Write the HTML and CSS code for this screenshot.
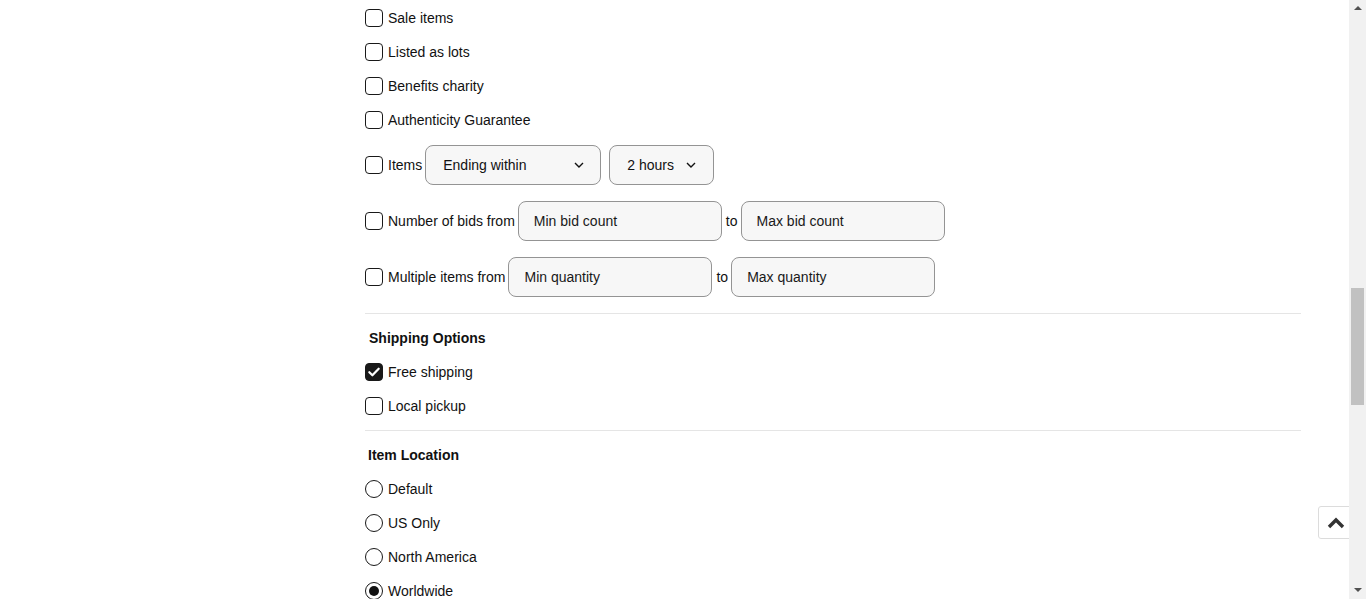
FILE: index.html
```html
<!DOCTYPE html>
<html lang="en">
<head>
<meta charset="utf-8">
<title>Advanced search filters</title>
<link rel="stylesheet" href="styles.css">
</head>
<body>
<main class="filters">
  <section class="group">
    <label class="row"><span class="box"></span><span class="lbl">Sale items</span></label>
    <label class="row"><span class="box"></span><span class="lbl">Listed as lots</span></label>
    <label class="row"><span class="box"></span><span class="lbl">Benefits charity</span></label>
    <label class="row"><span class="box"></span><span class="lbl">Authenticity Guarantee</span></label>
    <div class="row">
      <span class="box"></span><span class="lbl">Items</span>
      <button class="select sel-wide" type="button"><span>Ending within</span>
        <svg class="chev" width="10" height="6" viewBox="0 0 10 6"><path d="M1 1l4 4 4-4" fill="none" stroke="#111" stroke-width="1.4"/></svg>
      </button>
      <button class="select sel-narrow" type="button"><span>2 hours</span>
        <svg class="chev" width="10" height="6" viewBox="0 0 10 6"><path d="M1 1l4 4 4-4" fill="none" stroke="#111" stroke-width="1.4"/></svg>
      </button>
    </div>
    <div class="row">
      <span class="box"></span><span class="lbl">Number of bids from</span>
      <input class="field" type="text" placeholder="Min bid count">
      <span class="to">to</span>
      <input class="field" type="text" placeholder="Max bid count">
    </div>
    <div class="row">
      <span class="box"></span><span class="lbl">Multiple items from</span>
      <input class="field" type="text" placeholder="Min quantity">
      <span class="to">to</span>
      <input class="field" type="text" placeholder="Max quantity">
    </div>
  </section>
  <hr class="divider">
  <section class="group">
    <h3 class="heading">Shipping Options</h3>
    <label class="row"><span class="box checked"><svg width="18" height="18" viewBox="0 0 18 18"><path d="M4.3 9.2l3.1 3.1 6.3-6.6" fill="none" stroke="#fff" stroke-width="2.2" stroke-linecap="round" stroke-linejoin="round"/></svg></span><span class="lbl">Free shipping</span></label>
    <label class="row"><span class="box"></span><span class="lbl">Local pickup</span></label>
  </section>
  <hr class="divider divider-2">
  <section class="group">
    <h3 class="heading heading-2">Item Location</h3>
    <label class="row"><span class="radio"></span><span class="lbl">Default</span></label>
    <label class="row"><span class="radio"></span><span class="lbl">US Only</span></label>
    <label class="row"><span class="radio"></span><span class="lbl">North America</span></label>
    <label class="row"><span class="radio on"></span><span class="lbl">Worldwide</span></label>
  </section>
</main>

<button class="to-top" type="button" aria-label="Back to top">
  <svg width="18" height="12" viewBox="0 0 18 12"><path d="M2 10l7-7 7 7" fill="none" stroke="#333" stroke-width="3.4" stroke-linejoin="miter"/></svg>
</button>

<div class="scrollbar" aria-hidden="true">
  <span class="arrow up"></span>
  <div class="track"><div class="thumb"></div></div>
  <span class="arrow down"></span>
</div>
</body>
</html>
```
FILE: styles.css
```css
html, body {
  margin: 0;
  padding: 0;
  overflow: hidden;
  background: #fff;
}
body {
  font-family: "Liberation Sans", Arial, sans-serif;
  font-size: 14px;
  color: #111;
}
.filters {
  width: 936px;
  margin-left: 365px;
  padding-top: 1px;
}
.group {
  display: flex;
  flex-direction: column;
}
.row {
  display: flex;
  align-items: center;
  gap: 4px;
  padding: 8px 0;
  line-height: 18px;
}
.lbl {
  margin-left: 1px;
  margin-right: -1px;
  white-space: nowrap;
}
.box {
  width: 18px;
  height: 18px;
  box-sizing: border-box;
  border: 1.5px solid #191919;
  border-radius: 4px;
  flex: none;
  display: flex;
  align-items: center;
  justify-content: center;
}
.box.checked {
  background: #191919;
}
.box.checked svg {
  flex: none;
}
.radio {
  width: 18px;
  height: 18px;
  box-sizing: border-box;
  border: 1.5px solid #191919;
  border-radius: 50%;
  flex: none;
  display: flex;
  align-items: center;
  justify-content: center;
}
.radio.on::after {
  content: "";
  width: 10px;
  height: 10px;
  border-radius: 50%;
  background: #111;
}
.select {
  height: 40px;
  box-sizing: border-box;
  border: 1px solid #949494;
  border-radius: 8px;
  background: #f7f7f7;
  font: inherit;
  color: #111;
  display: flex;
  align-items: center;
  justify-content: space-between;
  padding: 0 16px 0 17px;
  flex: none;
}
.sel-wide {
  width: 176px;
}
.sel-narrow {
  width: 105px;
  margin-left: 4px;
  padding-left: 17px;
  padding-right: 17px;
}
.chev {
  flex: none;
}
.field {
  width: 204px;
  height: 40px;
  box-sizing: border-box;
  border: 1px solid #949494;
  border-radius: 8px;
  background: #f7f7f7;
  font: inherit;
  color: #111;
  padding: 0 15px;
  flex: none;
  margin: 0;
}
.field::placeholder {
  color: #191919;
  opacity: 1;
}
.to {
  margin: 0 -1px 0 0;
}
.divider {
  border: 0;
  border-top: 1px solid #e5e5e5;
  margin: 8px 0 8px;
  height: 0;
}
.divider-2 {
  margin-top: 7px;
}
.heading {
  margin: 0;
  font-size: 14px;
  font-weight: bold;
  line-height: 33px;
  padding-left: 4px;
}
.heading-2 {
  padding-left: 3px;
}
.to-top {
  position: fixed;
  left: 1318px;
  top: 506px;
  width: 40px;
  height: 33px;
  box-sizing: border-box;
  background: #fff;
  border: 1px solid #dcdcdc;
  border-radius: 3px;
  padding: 0 0 0 8px;
  display: flex;
  align-items: center;
}
.scrollbar {
  position: fixed;
  top: 0;
  right: 0;
  width: 17px;
  height: 599px;
  background: #f1f1f1;
  display: flex;
  flex-direction: column;
  align-items: center;
}
.arrow {
  width: 0;
  height: 0;
  border-left: 4px solid transparent;
  border-right: 4px solid transparent;
  flex: none;
}
.arrow.up {
  margin-top: 6px;
  border-bottom: 4px solid #505050;
}
.arrow.down {
  margin-bottom: 7px;
  border-top: 4px solid #505050;
}
.track {
  flex: 1;
  width: 17px;
  position: relative;
}
.thumb {
  position: absolute;
  left: 2px;
  top: 278px;
  width: 13px;
  height: 117px;
  background: #c1c1c1;
}
```
